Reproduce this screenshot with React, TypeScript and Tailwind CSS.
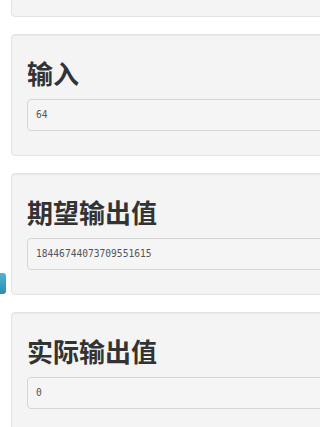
const cards = [
  { title: "\u00a0", value: "" },
  { title: "输入", value: "64" },
  { title: "期望输出值", value: "18446744073709551615" },
  { title: "实际输出值", value: "0" },
];

function Card({ title, value }: { title: string; value: string }) {
  return (
    <section className="w-[360px] rounded-[4px] border border-[#e3e3e3] bg-[#f4f4f4] px-[15px] pt-[22px] pb-[24px] shadow-[inset_0_1px_1px_rgba(0,0,0,0.05)]">
      <h2 className="mb-[10px] text-[26px] leading-[32px] font-bold text-[#333]">{title}</h2>
      <pre className="flex h-[32px] items-center rounded-[4px] border border-[#d6d6d6] bg-[#f5f5f5] px-[8px] font-['DejaVu_Sans_Mono',monospace] text-[9.6px] text-[#555]">
        {value}
      </pre>
    </section>
  );
}

export default function App() {
  return (
    <div className="relative h-[427px] w-[320px] overflow-hidden bg-white font-['Noto_Sans_CJK_SC','Noto_Sans',sans-serif]">
      <div className="-mt-[105px] flex flex-col gap-[17px] pl-[11px]">
        {cards.map((c, i) => (
          <Card key={i} title={c.title} value={c.value} />
        ))}
      </div>
      <div className="absolute top-[273px] left-0 h-[21px] w-[6px] rounded-r-[3px] bg-gradient-to-b from-[#4db6d4] to-[#2b8db0]" />
    </div>
  );
}
